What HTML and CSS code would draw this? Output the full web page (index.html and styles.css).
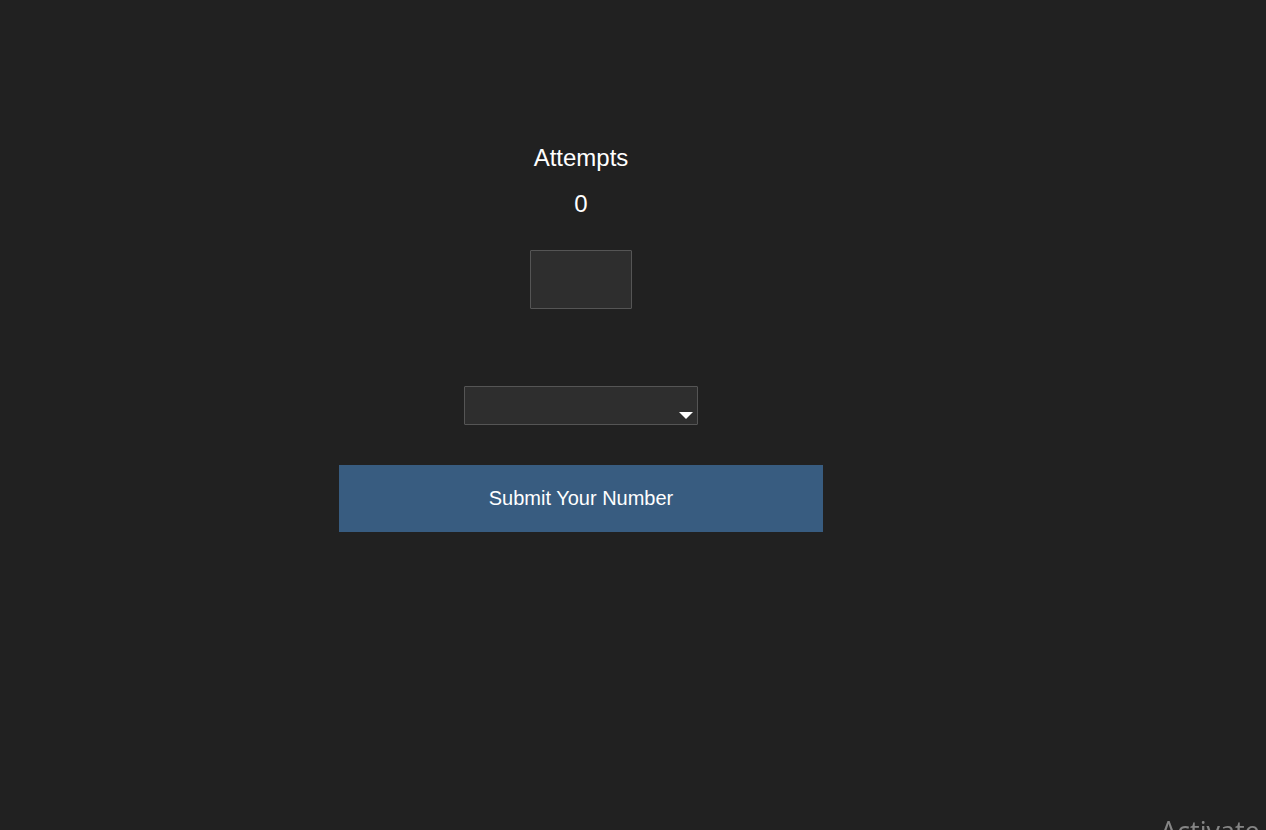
FILE: index.html
```html
<!DOCTYPE html>
<html lang="en">
<head>
<meta charset="utf-8">
<title>Guess the Number</title>
<link rel="stylesheet" href="styles.css">
</head>
<body>
<main class="game">
  <h2 class="label">Attempts</h2>
  <div class="count">0</div>
  <input class="guess" type="text" aria-label="Your number">
  <div class="select-wrap">
    <select class="range" aria-label="Range"></select>
  </div>
  <button class="submit" type="button">Submit Your Number</button>
</main>
<div class="watermark">Activate Windows</div>
</body>
</html>
```

FILE: styles.css
```css
html, body {
  margin: 0;
  padding: 0;
  height: 100%;
  overflow: hidden;
  background: #212121;
}

body {
  font-family: "Liberation Sans", Arial, sans-serif;
  color: #ffffff;
}

.game {
  width: 1162px;
  display: flex;
  flex-direction: column;
  align-items: center;
  padding-top: 144px;
}

.label {
  margin: 0;
  font-size: 24px;
  font-weight: normal;
  line-height: 28px;
}

.count {
  margin-top: 18px;
  font-size: 24px;
  line-height: 28px;
}

.guess {
  margin-top: 32px;
  width: 102px;
  height: 59px;
  box-sizing: border-box;
  background: #2e2e2e;
  border: 1px solid #555555;
  border-radius: 1px;
  color: #ffffff;
  outline: none;
  padding: 0 6px;
}

.select-wrap {
  margin-top: 77px;
  position: relative;
  width: 234px;
  height: 39px;
}

.range {
  appearance: none;
  -webkit-appearance: none;
  width: 100%;
  height: 100%;
  box-sizing: border-box;
  background: #2e2e2e;
  border: 1px solid #555555;
  border-radius: 1px;
  color: #ffffff;
  margin: 0;
  outline: none;
}

.select-wrap::after {
  content: "";
  position: absolute;
  right: 5px;
  bottom: 6px;
  width: 0;
  height: 0;
  border-left: 7px solid transparent;
  border-right: 7px solid transparent;
  border-top: 7px solid #ffffff;
  pointer-events: none;
}

.submit {
  margin-top: 40px;
  width: 484px;
  height: 67px;
  border: none;
  background: #385c80;
  color: #ffffff;
  font-family: "Liberation Sans", Arial, sans-serif;
  font-size: 20px;
  padding: 0;
  cursor: pointer;
}

.watermark {
  position: fixed;
  left: 1160px;
  top: 817px;
  font-family: "Open Sans", "Liberation Sans", sans-serif;
  font-size: 27px;
  line-height: 28px;
  color: rgba(255, 255, 255, 0.45);
  white-space: nowrap;
  pointer-events: none;
}
```
